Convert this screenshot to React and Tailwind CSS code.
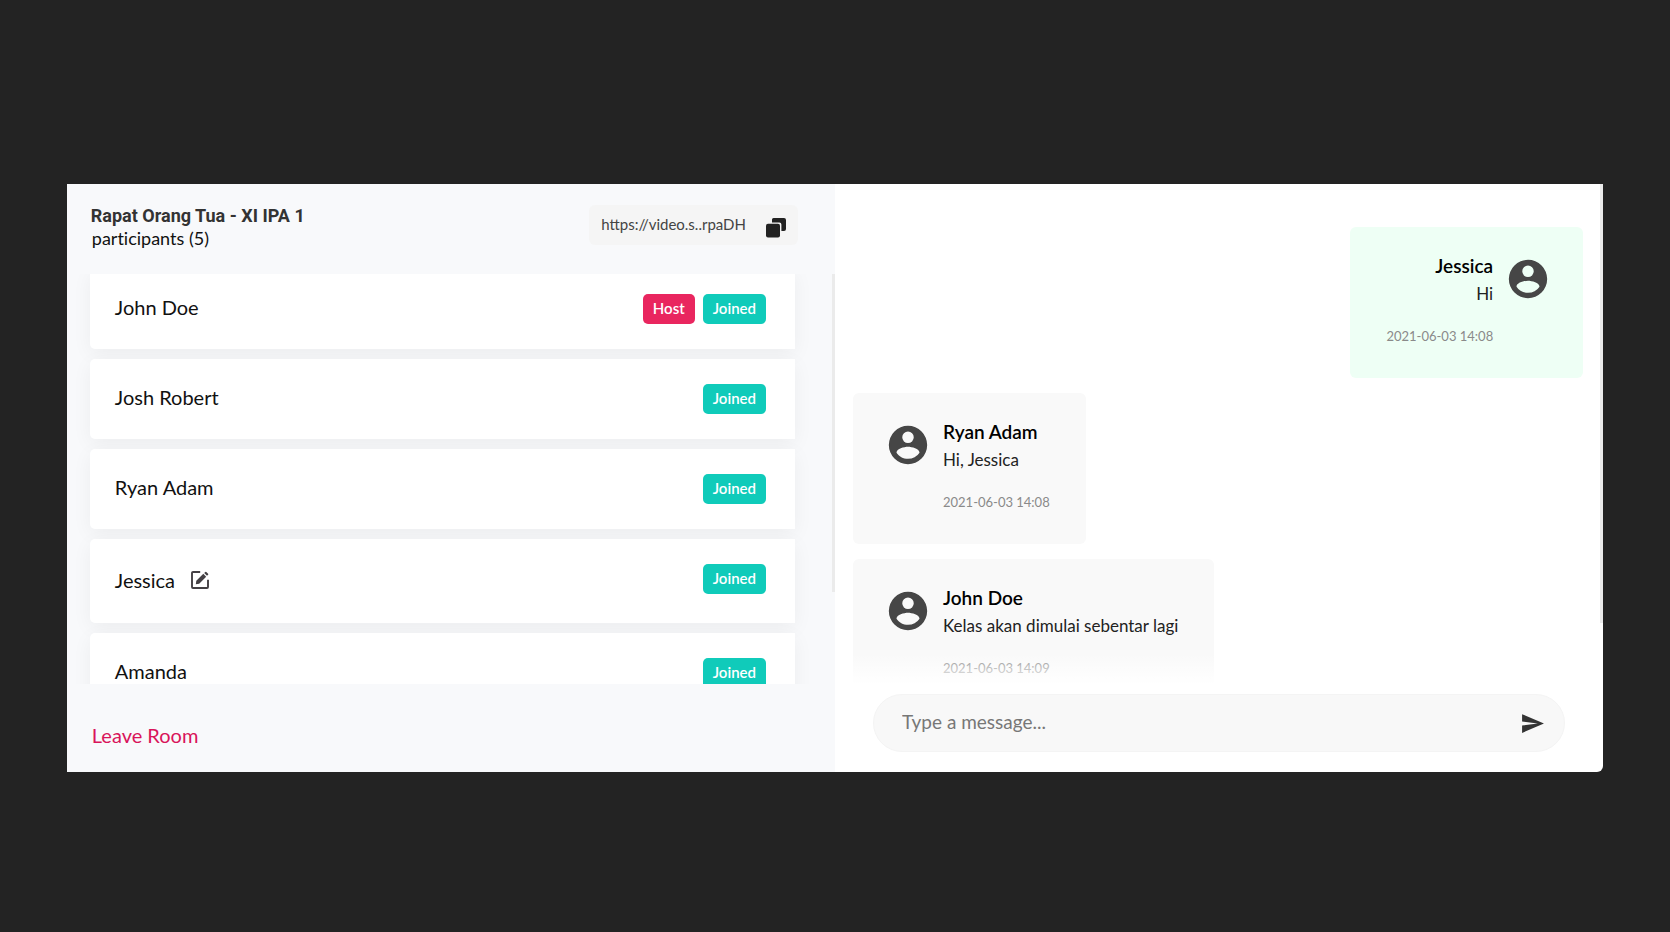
import React, { useState } from 'react';

const participants = [
  { id: 1, name: 'John Doe', host: true },
  { id: 2, name: 'Josh Robert' },
  { id: 3, name: 'Ryan Adam' },
  { id: 4, name: 'Jessica', me: true },
  { id: 5, name: 'Amanda' },
];

const messages = [
  { id: 1, name: 'Jessica', text: 'Hi', time: '2021-06-03 14:08', me: true },
  { id: 2, name: 'Ryan Adam', text: 'Hi, Jessica', time: '2021-06-03 14:08' },
  { id: 3, name: 'John Doe', text: 'Kelas akan dimulai sebentar lagi', time: '2021-06-03 14:09' },
];

const CopyIcon = () => (
  <svg viewBox="0 0 20 20" className="w-5 h-5" fill="#222">
    <path d="M7.5 0H18a2 2 0 0 1 2 2v9a2 2 0 0 1-2 2h-2.6V6.6a2 2 0 0 0-2-2H6V1.5A1.5 1.5 0 0 1 7.5 0z" />
    <rect x="0" y="5.8" width="14" height="13.8" rx="2" />
  </svg>
);

const EditIcon = () => (
  <svg viewBox="0 0 18 18" className="block w-[18px] h-[18px]" fill="none" stroke="#444044">
    <path d="M9.2 1H2a1 1 0 0 0-1 1v14a1 1 0 0 0 1 1h14a1 1 0 0 0 1-1V8.8" strokeWidth="1.9" />
    <path d="M4.8 13.3l.5-3.5L12.3 2.8l2.9 2.9L8.2 12.8z" fill="#444044" stroke="none" />
    <path d="M13.2 2l1.1-1.1a.7.7 0 0 1 1 0l1.8 1.8a.7.7 0 0 1 0 1L16 4.8z" fill="#444044" stroke="none" />
  </svg>
);

const UserIcon = () => (
  <svg viewBox="0 0 24 24" className="w-[46px] h-[46px] shrink-0" fill="#464646">
    <path
      fillRule="evenodd"
      d="M12 2a10 10 0 1 0 0 20 10 10 0 0 0 0-20zm0 3a3 3 0 1 1 0 6 3 3 0 0 1 0-6zm0 14.2c-2.5 0-4.71-1.28-6-3.22.03-1.99 4-3.08 6-3.08s5.97 1.09 6 3.08a7.23 7.23 0 0 1-6 3.22z"
    />
  </svg>
);

const SendIcon = () => (
  <svg viewBox="0 0 24 24" className="block w-[25px] h-[25px]" fill="#333">
    <path d="M2.01 21L23 12 2.01 3 2 10l15 2-15 2z" />
  </svg>
);

const Badge = ({ children, className }) => (
  <span className={`h-[30px] px-[10px] rounded-[5px] text-white text-[15px] leading-7 font-semibold ${className}`}>
    {children}
  </span>
);

const Participant = ({ user }) => (
  <li
    className={`flex items-start justify-between bg-white rounded-l-[5px] pl-[25px] pr-[29px] pt-[25px] shadow-[0_5px_20px_rgba(0,0,0,0.05)] ${
      user.me ? 'pb-[29px]' : 'pb-[25px]'
    }`}
  >
    <div className={`flex items-center gap-4 ${user.me ? 'pt-[3px]' : ''}`}>
      <span className="text-xl leading-[26px]">{user.name}</span>
      {user.me && (
        <button type="button" aria-label="Edit name">
          <EditIcon />
        </button>
      )}
    </div>
    <div className="flex gap-2">
      {user.host && <Badge className="bg-[#e9265f]">Host</Badge>}
      <Badge className="bg-[#10cbba]">Joined</Badge>
    </div>
  </li>
);

const Message = ({ message }) => (
  <li
    className={`flex items-start gap-3 rounded-md pt-[29px] pb-8 ${
      message.me
        ? 'self-end flex-row-reverse text-right pl-9 pr-8 bg-[#eefff5]'
        : 'self-start pl-8 pr-9 bg-[#f9f9f9]'
    }`}
  >
    <UserIcon />
    <div>
      <h3 className="text-[19px] leading-5 font-semibold text-black">{message.name}</h3>
      <p className="text-[17px] leading-9 text-[#222]">{message.text}</p>
      <time className="block mt-[14px] text-[13px] leading-5 text-[#8a8a8a]">{message.time}</time>
    </div>
  </li>
);

const App = () => {
  const [text, setText] = useState('');

  return (
    <div className="min-h-screen flex items-center justify-center bg-[#232323] font-['Lato','Noto_Sans',sans-serif] text-[#111]">
      <main className="w-[92%] flex mt-6">
        {/* Participants */}
        <section className="w-1/2 min-w-0 flex flex-col bg-[#f8f9fb]">
          <header className="flex items-start justify-between pl-6 pr-[37px] pt-[21px]">
            <div>
              <h1 className="font-['Roboto',sans-serif] text-lg leading-[22px] font-bold text-[#333]">
                Rapat Orang Tua - XI IPA 1
              </h1>
              <p className="pl-px text-lg leading-[22px] [font-variant-ligatures:none]">participants (5)</p>
            </div>
            <div className="h-10 flex items-start rounded-md bg-[#f5f5f5] px-3 gap-5">
              <span className="text-[15px] leading-[38px] text-[#444]">https://video.s..rpaDH</span>
              <button type="button" aria-label="Copy link" className="mt-[13px]">
                <CopyIcon />
              </button>
            </div>
          </header>

          <div className="relative h-[410px] mt-[25px] overflow-hidden">
            {/* list is scrolled down a little, so the first card is cut */}
            <ul className="flex flex-col gap-[10px] pl-[23px] pr-10 -mt-[5px]">
              {participants.map((user) => (
                <Participant key={user.id} user={user} />
              ))}
            </ul>
            <div className="absolute top-0 right-0 w-[3px] h-[318px] bg-[#ebebeb]" />
          </div>

          <footer className="px-[25px] pt-[37px] pb-[23px]">
            <button type="button" className="block text-xl text-[#d9145a]">
              Leave Room
            </button>
          </footer>
        </section>

        {/* Chat */}
        <section className="w-1/2 min-w-0 flex flex-col bg-white rounded-br-md">
          <div className="relative h-[500px] overflow-hidden">
            <ul className="flex flex-col gap-[15px] pl-[18px] pr-5 pt-[43px]">
              {messages.map((message) => (
                <Message key={message.id} message={message} />
              ))}
            </ul>
            <div className="absolute bottom-0 inset-x-0 h-[30px] bg-linear-to-b from-white/0 to-white" />
            <div className="absolute top-0 right-0 w-[3px] h-[439px] bg-[#ebebeb]" />
          </div>

          <form
            onSubmit={(e) => e.preventDefault()}
            className="flex items-center h-[58px] mt-[10px] mx-[38px] pl-7 pr-[19px] rounded-full bg-[#f8f8f8] border border-[#f4f4f4]"
          >
            <input
              type="text"
              aria-label="Message"
              placeholder="Type a message..."
              value={text}
              onChange={(e) => setText(e.target.value)}
              className="flex-1 min-w-0 pb-[2px] bg-transparent outline-none text-[19px] leading-7 placeholder:text-[#777]"
            />
            <button type="submit" aria-label="Send">
              <SendIcon />
            </button>
          </form>
        </section>
      </main>
    </div>
  );
};

export default App;
